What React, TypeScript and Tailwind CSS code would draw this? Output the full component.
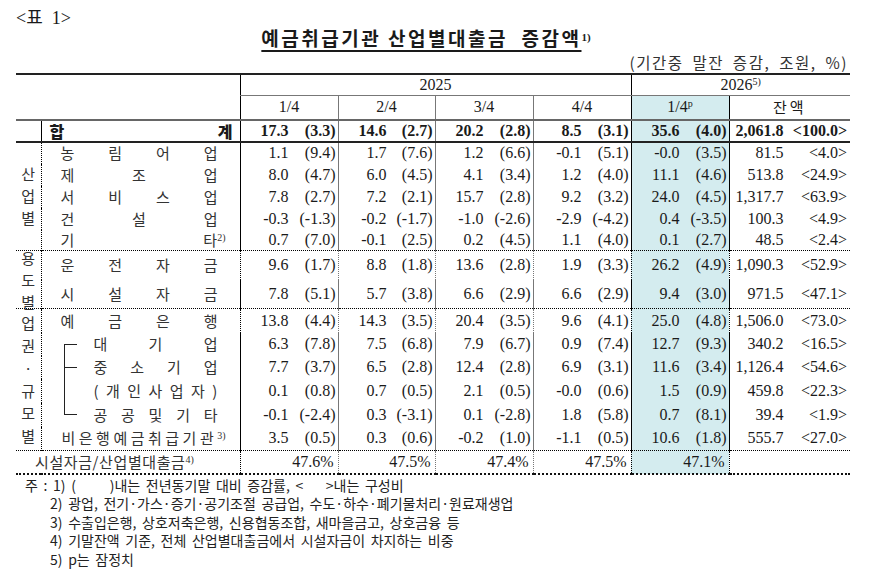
import React from "react";

type Pair = [string, string];

type DataRow = {
  label: React.ReactNode;
  vals: Pair[];
  amt: string;
  share: string;
  h: string;
  bold?: boolean;
};

const HL = "bg-[#d4ecef]";

// label with the characters spread out across the cell
function Spread({ chars, pad }: { chars: React.ReactNode[]; pad: string }) {
  return (
    <div className={`flex justify-between ${pad}`}>
      {chars.map((c, i) => (
        <span key={i}>{c}</span>
      ))}
    </div>
  );
}

function Bracket({ kind }: { kind: "top" | "mid" | "line" | "bottom" }) {
  if (kind === "top")
    return <span className="absolute left-[22px] top-1/2 bottom-0 w-[13px] border-l border-t border-[#222]" />;
  if (kind === "bottom")
    return <span className="absolute left-[22px] top-0 h-1/2 w-[13px] border-l border-b border-[#222]" />;
  if (kind === "mid")
    return (
      <>
        <span className="absolute left-[22px] top-0 bottom-0 border-l border-[#222]" />
        <span className="absolute left-[22px] top-1/2 w-[13px] border-t border-[#222]" />
      </>
    );
  return <span className="absolute left-[22px] top-0 bottom-0 border-l border-[#222]" />;
}

const kor = "font-['Noto_Sans_CJK_KR',sans-serif]";

const sec1: DataRow[] = [
  {
    label: <Spread chars={["농", "림", "어", "업"]} pad="pl-[19px] pr-[22px]" />,
    vals: [["1.1", "(9.4)"], ["1.7", "(7.6)"], ["1.2", "(6.6)"], ["-0.1", "(5.1)"], ["-0.0", "(3.5)"]],
    amt: "81.5",
    share: "<4.0>",
    h: "h-[22px]",
  },
  {
    label: <Spread chars={["제", "조", "업"]} pad="pl-[19px] pr-[22px]" />,
    vals: [["8.0", "(4.7)"], ["6.0", "(4.5)"], ["4.1", "(3.4)"], ["1.2", "(4.0)"], ["11.1", "(4.6)"]],
    amt: "513.8",
    share: "<24.9>",
    h: "h-[22px]",
  },
  {
    label: <Spread chars={["서", "비", "스", "업"]} pad="pl-[19px] pr-[22px]" />,
    vals: [["7.8", "(2.7)"], ["7.2", "(2.1)"], ["15.7", "(2.8)"], ["9.2", "(3.2)"], ["24.0", "(4.5)"]],
    amt: "1,317.7",
    share: "<63.9>",
    h: "h-[22px]",
  },
  {
    label: <Spread chars={["건", "설", "업"]} pad="pl-[19px] pr-[22px]" />,
    vals: [["-0.3", "(-1.3)"], ["-0.2", "(-1.7)"], ["-1.0", "(-2.6)"], ["-2.9", "(-4.2)"], ["0.4", "(-3.5)"]],
    amt: "100.3",
    share: "<4.9>",
    h: "h-[22px]",
  },
  {
    label: (
      <Spread
        chars={[
          "기",
          <>
            타<sup className="text-[10px] font-['Liberation_Serif']">2)</sup>
          </>,
        ]}
        pad="pl-[19px] pr-[14px]"
      />
    ),
    vals: [["0.7", "(7.0)"], ["-0.1", "(2.5)"], ["0.2", "(4.5)"], ["1.1", "(4.0)"], ["0.1", "(2.7)"]],
    amt: "48.5",
    share: "<2.4>",
    h: "h-[21px]",
  },
];

const sec2: DataRow[] = [
  {
    label: <Spread chars={["운", "전", "자", "금"]} pad="pl-[19px] pr-[22px]" />,
    vals: [["9.6", "(1.7)"], ["8.8", "(1.8)"], ["13.6", "(2.8)"], ["1.9", "(3.3)"], ["26.2", "(4.9)"]],
    amt: "1,090.3",
    share: "<52.9>",
    h: "h-[29px]",
  },
  {
    label: <Spread chars={["시", "설", "자", "금"]} pad="pl-[19px] pr-[22px]" />,
    vals: [["7.8", "(5.1)"], ["5.7", "(3.8)"], ["6.6", "(2.9)"], ["6.6", "(2.9)"], ["9.4", "(3.0)"]],
    amt: "971.5",
    share: "<47.1>",
    h: "h-[29px]",
  },
];

const sec3: (DataRow & { bracket?: "top" | "mid" | "line" | "bottom" })[] = [
  {
    label: <Spread chars={["예", "금", "은", "행"]} pad="pl-[19px] pr-[22px]" />,
    vals: [["13.8", "(4.4)"], ["14.3", "(3.5)"], ["20.4", "(3.5)"], ["9.6", "(4.1)"], ["25.0", "(4.8)"]],
    amt: "1,506.0",
    share: "<73.0>",
    h: "h-[24px]",
  },
  {
    label: <Spread chars={["대", "기", "업"]} pad="pl-[52px] pr-[22px]" />,
    vals: [["6.3", "(7.8)"], ["7.5", "(6.8)"], ["7.9", "(6.7)"], ["0.9", "(7.4)"], ["12.7", "(9.3)"]],
    amt: "340.2",
    share: "<16.5>",
    h: "h-[23px]",
    bracket: "top",
  },
  {
    label: <Spread chars={["중", "소", "기", "업"]} pad="pl-[52px] pr-[22px]" />,
    vals: [["7.7", "(3.7)"], ["6.5", "(2.8)"], ["12.4", "(2.8)"], ["6.9", "(3.1)"], ["11.6", "(3.4)"]],
    amt: "1,126.4",
    share: "<54.6>",
    h: "h-[23px]",
    bracket: "mid",
  },
  {
    label: <Spread chars={["(", "개", "인", "사", "업", "자", ")"]} pad="pl-[52px] pr-[22px]" />,
    vals: [["0.1", "(0.8)"], ["0.7", "(0.5)"], ["2.1", "(0.5)"], ["-0.0", "(0.6)"], ["1.5", "(0.9)"]],
    amt: "459.8",
    share: "<22.3>",
    h: "h-[24px]",
    bracket: "line",
  },
  {
    label: <Spread chars={["공", "공", "및", "기", "타"]} pad="pl-[52px] pr-[22px]" />,
    vals: [["-0.1", "(-2.4)"], ["0.3", "(-3.1)"], ["0.1", "(-2.8)"], ["1.8", "(5.8)"], ["0.7", "(8.1)"]],
    amt: "39.4",
    share: "<1.9>",
    h: "h-[24px]",
    bracket: "bottom",
  },
  {
    label: (
      <div className="pl-[20px] tracking-[3.5px]">
        비은행예금취급기관<sup className="text-[10px] tracking-normal font-['Liberation_Serif']">3)</sup>
      </div>
    ),
    vals: [["3.5", "(0.5)"], ["0.3", "(0.6)"], ["-0.2", "(1.0)"], ["-1.1", "(0.5)"], ["10.6", "(1.8)"]],
    amt: "555.7",
    share: "<27.0>",
    h: "h-[24px]",
  },
];

const vLine = ["border-l-black", "border-l-[#777]", "border-l-[#777]", "border-l-[#777]", "border-l-black"];

function Cells({ r, topCls }: { r: DataRow; topCls: string }) {
  return (
    <>
      {r.vals.map(([v, p], i) => (
        <td key={i} className={`p-0 border-l ${vLine[i]} ${topCls} ${i === 4 ? HL : ""}`}>
          <div className={`flex ${r.bold ? "font-bold" : ""}`}>
            <span className="w-[48px] text-right">{v}</span>
            <span className="flex-1 text-right pr-[2px]">{p}</span>
          </div>
        </td>
      ))}
      <td className={`p-0 border-l border-l-black ${topCls}`}>
        <div className={`flex ${r.bold ? "font-bold" : ""}`}>
          <span className="w-[54px] text-right">{r.amt}</span>
          <span className="flex-1 text-right pr-[3px]">{r.share}</span>
        </div>
      </td>
    </>
  );
}

function Category({ chars, span, lead }: { chars: string[]; span: number; lead: string }) {
  return (
    <td
      rowSpan={span}
      className={`p-0 align-middle border-t border-dotted border-t-black border-r border-r-black ${kor} text-[15px] text-[#333]`}
    >
      {/* fixed small box so the stacked text never stretches the rows */}
      <div className={`h-[40px] flex flex-col items-center justify-center ${lead}`}>
        {chars.map((c, i) => (
          <span key={i}>{c}</span>
        ))}
      </div>
    </td>
  );
}

export default function App() {
  return (
    <div className="w-[878px] h-[571px] bg-white text-[#1a1a1a] font-['Liberation_Serif','Noto_Sans_CJK_KR',serif] text-[16px] overflow-hidden">
      <div className="pl-[16px] pt-[8px]">
        <div className="h-[20px] leading-[20px] text-[18px] whitespace-pre">&lt;표  1&gt;</div>
        <div className="h-[20px] leading-[20px] text-center w-[834px] pr-[14px]">
          <span
            className={`${kor} font-bold text-[19px] tracking-[2.5px] whitespace-pre underline underline-offset-[4px] decoration-[1.5px]`}
          >
            예금취급기관 산업별대출금  증감액
          </span>
          <sup className="text-[11px] font-bold font-['Liberation_Serif']">1)</sup>
        </div>
        <div
          className={`h-[25px] pt-[4px] leading-[20px] w-[834px] text-right text-[15.5px] ${kor} pr-[2px] text-[#333] tracking-[1.5px] [word-spacing:4px]`}
        >
          (기간중 말잔 증감, 조원, %)
        </div>

        <table className="table-fixed border-collapse w-[834px] leading-[20px]">
          <colgroup>
            <col className="w-[25px]" />
            <col className="w-[199px]" />
            <col className="w-[98px]" />
            <col className="w-[97px]" />
            <col className="w-[98px]" />
            <col className="w-[98px]" />
            <col className="w-[98px]" />
            <col className="w-[121px]" />
          </colgroup>
          <tbody>
            <tr className="h-[21px]">
              <td colSpan={2} rowSpan={2} className="p-0 border-t-2 border-t-[#222]" />
              <td colSpan={4} className="p-0 text-center border-t-2 border-t-[#222] border-l border-l-black border-b border-b-[#777]">
                2025
              </td>
              <td colSpan={2} className="p-0 text-center border-t-2 border-t-[#222] border-l border-l-black border-b border-b-[#777]">
                2026<sup className="text-[10px]">5)</sup>
              </td>
            </tr>
            <tr className="h-[24px] text-center">
              <td className="p-0 border-l border-l-black">1/4</td>
              <td className="p-0 border-l border-l-[#777]">2/4</td>
              <td className="p-0 border-l border-l-[#777]">3/4</td>
              <td className="p-0 border-l border-l-[#777]">4/4</td>
              <td className={`p-0 border-l border-l-black ${HL}`}>
                1/4<sup className="text-[10px]">p</sup>
              </td>
              <td className={`p-0 border-l border-l-black ${kor} text-[15px] tracking-[3px]`}>잔액</td>
            </tr>

            {/* 합계 */}
            <tr className="h-[21px]">
              <td className="p-0 border-t-2 border-t-[#666] border-b-2 border-b-[#222]" />
              <td className="p-0 border-t-2 border-t-[#666] border-b-2 border-b-[#222] border-l border-l-black">
                <div className={`flex justify-between pl-[8px] pr-[7px] ${kor} font-black text-[16px]`}>
                  <span>합</span>
                  <span>계</span>
                </div>
              </td>
              <Cells
                r={{
                  label: null,
                  vals: [["17.3", "(3.3)"], ["14.6", "(2.7)"], ["20.2", "(2.8)"], ["8.5", "(3.1)"], ["35.6", "(4.0)"]],
                  amt: "2,061.8",
                  share: "<100.0>",
                  h: "",
                  bold: true,
                }}
                topCls="border-t-2 border-t-[#666] border-b-2 border-b-[#222]"
              />
            </tr>

            {sec1.map((r, i) => (
              <tr key={i} className={r.h}>
                {i === 0 && <Category chars={["산", "업", "별"]} span={5} lead="leading-[22px]" />}
                <td className={`p-0 ${kor} text-[15px] text-[#333]`}>{r.label}</td>
                <Cells r={r} topCls="" />
              </tr>
            ))}

            {sec2.map((r, i) => (
              <tr key={i} className={r.h}>
                {i === 0 && <Category chars={["용", "도", "별"]} span={2} lead="leading-[22px]" />}
                <td className={`p-0 ${kor} text-[15px] text-[#333] ${i === 0 ? "border-t border-dotted border-t-black" : ""}`}>
                  {r.label}
                </td>
                <Cells r={r} topCls={i === 0 ? "border-t border-t-black border-dotted" : ""} />
              </tr>
            ))}

            {sec3.map((r, i) => (
              <tr key={i} className={r.h}>
                {i === 0 && <Category chars={["업", "권", "·", "규", "모", "별"]} span={6} lead="leading-[22.5px]" />}
                <td className={`p-0 relative ${kor} text-[15px] text-[#333] ${i === 0 ? "border-t border-dotted border-t-black" : ""}`}>
                  {r.bracket && <Bracket kind={r.bracket} />}
                  {r.label}
                </td>
                <Cells r={r} topCls={i === 0 ? "border-t border-t-black border-dotted" : ""} />
              </tr>
            ))}

            <tr className="h-[23px]">
              <td
                colSpan={2}
                className={`p-0 border-t border-dotted border-t-black border-b-2 border-b-[#111] ${kor} text-[15px] text-[#333]`}
              >
                <div className="pl-[19px] tracking-[0.6px]">
                  시설자금/산업별대출금<sup className="text-[10px] tracking-normal font-['Liberation_Serif']">4)</sup>
                </div>
              </td>
              {["47.6%", "47.5%", "47.4%", "47.5%", "47.1%"].map((v, i) => (
                <td
                  key={i}
                  className={`p-0 text-right pr-[4px] border-l ${vLine[i]} border-t border-dotted border-t-black border-b-2 border-b-[#111] ${i === 4 ? HL : ""}`}
                >
                  {v}
                </td>
              ))}
              <td className="p-0 border-l border-l-black border-t border-dotted border-t-black border-b-2 border-b-[#111]" />
            </tr>
          </tbody>
        </table>

        <div className={`${kor} text-[14px] leading-[18.6px] text-[#222] pt-[1px] [word-spacing:2.5px]`}>
          <div className="pl-[9px] whitespace-pre">
            주 : 1) (      )내는 전년동기말 대비 증감률, &lt;    &gt;내는 구성비
          </div>
          <div className="pl-[34px]">2) 광업, 전기·가스·증기·공기조절 공급업, 수도·하수·폐기물처리·원료재생업</div>
          <div className="pl-[34px]">3) 수출입은행, 상호저축은행, 신용협동조합, 새마을금고, 상호금융 등</div>
          <div className="pl-[34px]">4) 기말잔액 기준, 전체 산업별대출금에서 시설자금이 차지하는 비중</div>
          <div className="pl-[34px]">5) p는 잠정치</div>
        </div>
      </div>
    </div>
  );
}
